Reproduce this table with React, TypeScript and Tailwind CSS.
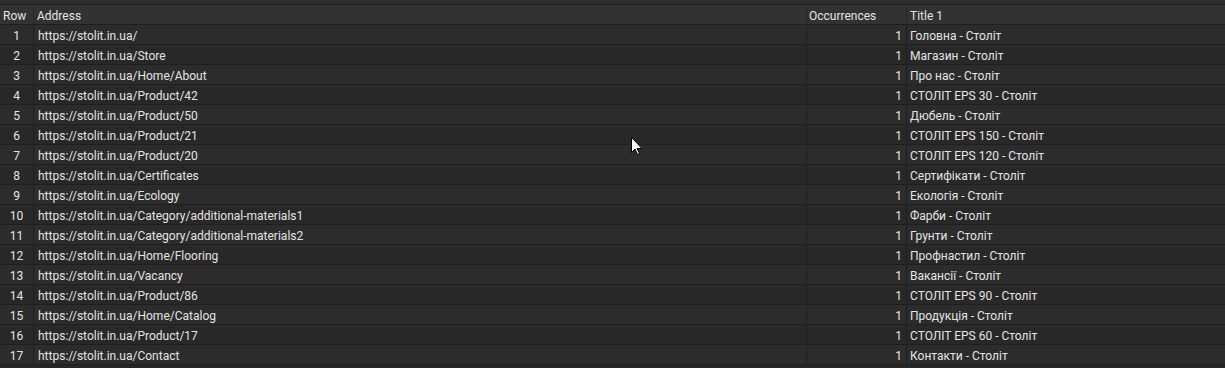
const rows: [string, string][] = [
  ['https://stolit.in.ua/', 'Головна - Століт'],
  ['https://stolit.in.ua/Store', 'Магазин - Століт'],
  ['https://stolit.in.ua/Home/About', 'Про нас - Століт'],
  ['https://stolit.in.ua/Product/42', 'СТОЛІТ EPS 30 - Століт'],
  ['https://stolit.in.ua/Product/50', 'Дюбель - Століт'],
  ['https://stolit.in.ua/Product/21', 'СТОЛІТ EPS 150 - Століт'],
  ['https://stolit.in.ua/Product/20', 'СТОЛІТ EPS 120 - Століт'],
  ['https://stolit.in.ua/Certificates', 'Сертифікати - Століт'],
  ['https://stolit.in.ua/Ecology', 'Екологія - Століт'],
  ['https://stolit.in.ua/Category/additional-materials1', 'Фарби - Століт'],
  ['https://stolit.in.ua/Category/additional-materials2', 'Грунти - Століт'],
  ['https://stolit.in.ua/Home/Flooring', 'Профнастил - Століт'],
  ['https://stolit.in.ua/Vacancy', 'Вакансії - Століт'],
  ['https://stolit.in.ua/Product/86', 'СТОЛІТ EPS 90 - Століт'],
  ['https://stolit.in.ua/Home/Catalog', 'Продукція - Століт'],
  ['https://stolit.in.ua/Product/17', 'СТОЛІТ EPS 60 - Століт'],
  ['https://stolit.in.ua/Contact', 'Контакти - Століт'],
];

export default function App() {
  return (
    <div
      className="relative w-[1225px] h-[368px] overflow-hidden bg-[#262626] text-[12px] leading-[16px] text-[#e4e4e4]"
      style={{ fontFamily: 'Roboto, "Noto Sans", sans-serif' }}
    >
      <div className="h-[5px] bg-[#2c2c2c] border-b border-[#1f1f1f]" />

      <div className="flex h-[20px] pt-[3px] bg-[#323232] border-b border-[#1f1f1f]">
        <div className="w-[34px] shrink-0 border-r border-[#262626] pl-[3px]">Row</div>
        <div className="w-[773px] shrink-0 border-r border-[#262626] pl-[3px]">Address</div>
        <div className="w-[100px] shrink-0 border-r border-[#262626] pl-[2px]">Occurrences</div>
        <div className="flex-1 pl-[3px]">Title 1</div>
      </div>

      {rows.map(([url, title], i) => (
        <div
          key={url}
          className={`flex h-[20px] border-b border-[#1f1f1f] ${i % 2 === 0 ? 'bg-[#2c2c2c]' : 'bg-[#282828]'}`}
        >
          <div className="w-[34px] shrink-0 border-r border-[#1f1f1f] pt-[3px] text-center">{i + 1}</div>
          <div className="w-[773px] shrink-0 border-r border-[#1f1f1f] pt-[3px] pl-[4px] truncate">{url}</div>
          <div className="w-[100px] shrink-0 border-r border-[#1f1f1f] pt-[3px] pr-[4px] text-right">1</div>
          <div className="flex-1 pt-[3px] pl-[3px] truncate">{title}</div>
        </div>
      ))}

      <svg className="absolute left-[631px] top-[137px]" width="13" height="20" viewBox="0 0 13 20">
        <path d="M0.5 0.5 L0.5 15.5 L4 12 L6.5 17.5 L8.5 16.5 L6 11.5 L11 11.5 Z" fill="#fff" stroke="#000" strokeWidth="1" />
      </svg>
    </div>
  );
}
